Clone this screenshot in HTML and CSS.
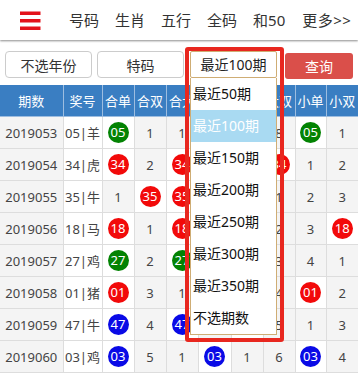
FILE: index.html
```html
<!DOCTYPE html>
<html lang="zh-CN">
<head>
    <meta charset="UTF-8">
    <meta name="viewport" content="width=device-width, initial-scale=1.0">
    <title>特码合单双走势</title>
    <link rel="stylesheet" href="styles.css">
</head>
<body>
    <header class="topbar">
        <a class="menu-btn" href="#">
            <svg width="21" height="20" viewBox="0 0 21 20">
                <rect x="0" y="0.5" width="20.5" height="3.5" fill="#e3131b"/>
                <rect x="0" y="8" width="20.5" height="3.5" fill="#e3131b"/>
                <rect x="0" y="15.5" width="20.5" height="3.5" fill="#e3131b"/>
            </svg>
        </a>
        <nav class="nav">
            <a href="#">号码</a>
            <a href="#">生肖</a>
            <a href="#">五行</a>
            <a href="#">全码</a>
            <a href="#">和50</a>
            <a href="#">更多&gt;&gt;</a>
        </nav>
    </header>

    <div class="filter">
        <button class="btn btn-year">不选年份</button>
        <button class="btn btn-type">特码</button>
        <div class="select">最近100期</div>
        <button class="btn-query">查询</button>
    </div>

    <table class="trend">
        <colgroup>
            <col style="width:63px"><col style="width:39px">
            <col style="width:32px"><col style="width:32px"><col style="width:32px"><col style="width:33px">
            <col style="width:32px"><col style="width:32px"><col style="width:31px"><col style="width:32px">
        </colgroup>
        <thead>
            <tr>
                <th>期数</th><th>奖号</th><th>合单</th><th>合双</th><th>合大</th>
                <th>合小</th><th>大单</th><th>大双</th><th>小单</th><th>小双</th>
            </tr>
        </thead>
        <tbody>
            <tr>
                <td class="issue">2019053</td><td class="num">05|羊</td>
                <td class="hit"><span class="ball g">05</span></td><td>1</td><td>1</td>
                <td class="hit"><span class="ball g">05</span></td><td>2</td><td>8</td>
                <td class="hit"><span class="ball g">05</span></td><td>1</td>
            </tr>
            <tr>
                <td class="issue">2019054</td><td class="num">34|虎</td>
                <td class="hit"><span class="ball r">34</span></td><td>2</td>
                <td class="hit"><span class="ball r">34</span></td><td>1</td><td>3</td>
                <td class="hit"><span class="ball r">34</span></td><td>1</td><td>2</td>
            </tr>
            <tr>
                <td class="issue">2019055</td><td class="num">35|牛</td>
                <td>1</td><td class="hit"><span class="ball r">35</span></td>
                <td class="hit"><span class="ball r">35</span></td><td>2</td>
                <td class="hit"><span class="ball r">35</span></td><td>1</td><td>2</td><td>3</td>
            </tr>
            <tr>
                <td class="issue">2019056</td><td class="num">18|马</td>
                <td class="hit"><span class="ball r">18</span></td><td>1</td>
                <td class="hit"><span class="ball r">18</span></td><td>3</td><td>1</td><td>2</td><td>3</td>
                <td class="hit"><span class="ball r">18</span></td>
            </tr>
            <tr>
                <td class="issue">2019057</td><td class="num">27|鸡</td>
                <td class="hit"><span class="ball g">27</span></td><td>2</td>
                <td class="hit"><span class="ball g">27</span></td><td>4</td>
                <td class="hit"><span class="ball g">27</span></td><td>3</td><td>4</td><td>1</td>
            </tr>
            <tr>
                <td class="issue">2019058</td><td class="num">01|猪</td>
                <td class="hit"><span class="ball r">01</span></td><td>3</td><td>1</td>
                <td class="hit"><span class="ball r">01</span></td><td>1</td><td>4</td>
                <td class="hit"><span class="ball r">01</span></td><td>2</td>
            </tr>
            <tr>
                <td class="issue">2019059</td><td class="num">47|牛</td>
                <td class="hit"><span class="ball b">47</span></td><td>4</td>
                <td class="hit"><span class="ball b">47</span></td><td>1</td>
                <td class="hit"><span class="ball b">47</span></td><td>5</td><td>1</td><td>3</td>
            </tr>
            <tr>
                <td class="issue">2019060</td><td class="num">03|鸡</td>
                <td class="hit"><span class="ball b">03</span></td><td>5</td><td>1</td>
                <td class="hit"><span class="ball b">03</span></td><td>1</td><td>6</td>
                <td class="hit"><span class="ball b">03</span></td><td>4</td>
            </tr>
        </tbody>
    </table>

    <!-- 期数下拉 (展开状态) -->
    <ul class="dropdown">
        <li>最近50期</li>
        <li class="active">最近100期</li>
        <li>最近150期</li>
        <li>最近200期</li>
        <li>最近250期</li>
        <li>最近300期</li>
        <li>最近350期</li>
        <li>不选期数</li>
    </ul>
    <div class="mark"></div>
</body>
</html>
```

FILE: styles.css
```css
body {
    margin: 0;
    width: 358px;
    background-color: #fff;
    color: #333;
    font-family: 'Noto Sans', 'Noto Sans CJK SC', sans-serif;
    position: relative;
    overflow: hidden;
}
a {
    color: #333;
    text-decoration: none;
}

/* 顶部导航 */
.topbar {
    height: 40px;
    display: flex;
    align-items: center;
    background-color: #fff;
    box-shadow: 0 1px 2px rgba(0, 0, 0, 0.45);
    position: relative;
    z-index: 1;
}
.menu-btn {
    display: flex;
    flex-shrink: 0;
    margin-left: 20px;
    margin-top: 2px;
    width: 49px;
}
.nav {
    display: flex;
    flex-shrink: 0;
    font-size: 15px;
    white-space: nowrap;
}
.nav a {
    flex-shrink: 0;
    margin-right: 16px;
    line-height: 20px;
}
.nav a:nth-child(5) {
    margin-right: 17px;
}
.nav a:last-child {
    letter-spacing: 0.5px;
}

/* 筛选 */
.filter {
    display: flex;
    align-items: flex-start;
    padding: 11px 0 0 5px;
    height: 34px;
    box-sizing: content-box;
}
.btn {
    height: 27px;
    width: 87px;
    border: 1px solid #ccc;
    border-radius: 4px;
    background-color: #fff;
    color: #333;
    font-family: inherit;
    font-size: 14px;
    padding: 0;
}
.btn-type {
    margin-left: 5px;
}
.select {
    margin-left: 6px;
    width: 87px;
    height: 27px;
    box-sizing: border-box;
    border: 1px solid #cfad74;
    border-radius: 2px;
    font-size: 14px;
    line-height: 25px;
    text-align: center;
    color: #222;
}
.btn-query {
    margin: 2px 0 0 8px;
    width: 68px;
    height: 26px;
    border: none;
    border-radius: 3px;
    background-color: #da4f4a;
    color: #fff;
    font-family: inherit;
    font-size: 14px;
    padding: 0;
}

/* 走势表 */
.trend {
    width: 358px;
    table-layout: fixed;
    border-collapse: collapse;
    font-size: 13px;
    text-align: center;
}
.trend th {
    height: 31px;
    padding: 0;
    background-color: #3a7ec2;
    color: #fff;
    font-weight: normal;
    font-size: 13px;
    border: 1px solid #9dbde0;
    border-top: none;
}
.trend td {
    height: 31px;
    padding: 0;
    border: 1px solid #ddd;
    background-color: #f4f4f4;
    color: #444;
}
.trend td.num,
.trend td.hit {
    background-color: #fff;
}
.trend th:first-child,
.trend td:first-child {
    border-left: none;
}
.trend th:last-child,
.trend td:last-child {
    border-right: none;
}
.ball {
    display: inline-block;
    width: 21px;
    height: 21px;
    line-height: 21px;
    border-radius: 50%;
    color: #fff;
    font-size: 13px;
    vertical-align: middle;
}
.ball.g { background-color: #038303; }
.ball.r { background-color: #f20a0a; }
.ball.b { background-color: #0a0ae6; }

/* 下拉列表 */
.dropdown {
    position: absolute;
    left: 190px;
    top: 78px;
    width: 87px;
    margin: 0;
    padding: 0;
    list-style: none;
    box-sizing: border-box;
    border: 1px solid #cfad74;
    border-top: none;
    background-color: #fff;
    z-index: 2;
}
.dropdown li {
    height: 32px;
    line-height: 32px;
    padding-left: 2px;
    font-size: 14px;
    color: #111;
}
.dropdown li.active {
    background-color: #a9daf2;
    color: #fff;
}

/* 红色标注框 */
.mark {
    position: absolute;
    left: 185px;
    top: 47px;
    width: 99px;
    height: 295px;
    box-sizing: border-box;
    border: 4px solid #e8271f;
    border-radius: 3px;
    z-index: 3;
}
```
